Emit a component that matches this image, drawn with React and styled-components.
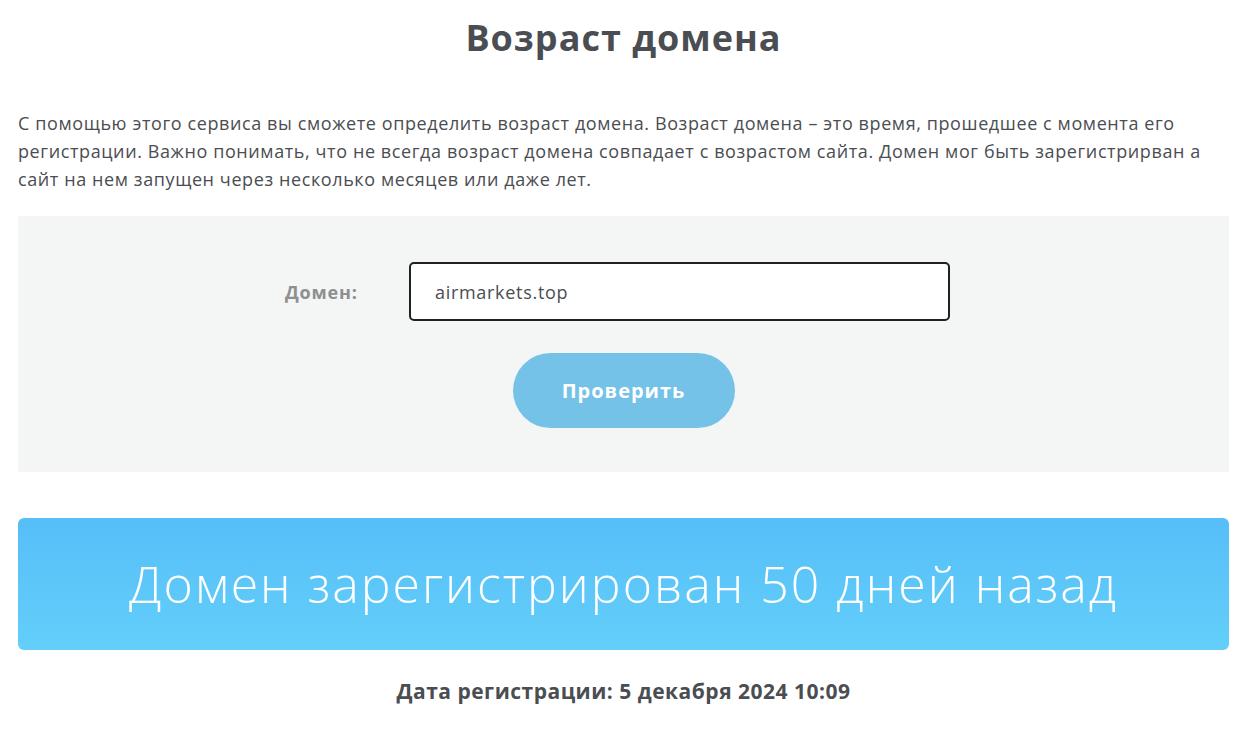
import React from "react";
import styled, { createGlobalStyle } from "styled-components";

const GlobalStyle = createGlobalStyle`
  html, body {
    margin: 0;
    padding: 0;
    background: #ffffff;
  }
  body {
    font-family: "Open Sans", "DejaVu Sans", sans-serif;
    color: #4a4d52;
  }
`;

const Page = styled.div`
  padding: 0 17px 0 18px;
  display: flex;
  flex-direction: column;
`;

const Title = styled.h1`
  margin: 14px 0 0;
  text-align: center;
  font-size: 36px;
  font-weight: 700;
  letter-spacing: 1px;
  line-height: 48px;
  color: #4a4d52;
`;

const Intro = styled.p`
  margin: 47px 0 0;
  font-size: 18px;
  letter-spacing: 0.6px;
  line-height: 28px;
  color: #4a4d52;
`;

const FormPanel = styled.div`
  margin-top: 23px;
  height: 256px;
  box-sizing: border-box;
  background: #f4f5f5;
  display: flex;
  flex-direction: column;
  align-items: center;
  padding-top: 46px;
  gap: 32px;
`;

const FieldRow = styled.div`
  display: flex;
  align-items: center;
  margin-left: -12px;
`;

const Label = styled.label`
  width: 124px;
  font-size: 18px;
  font-weight: 700;
  letter-spacing: 0.8px;
  color: #8d8f91;
`;

const Input = styled.input`
  width: 541px;
  height: 59px;
  box-sizing: border-box;
  border: 2px solid #1f2124;
  border-radius: 5px;
  padding: 0 0 0 24px;
  font-family: "Open Sans", sans-serif;
  font-size: 18px;
  letter-spacing: 0.7px;
  color: #4a4d52;
  background: #ffffff;
  outline: none;
`;

const CheckButton = styled.button`
  width: 222px;
  height: 75px;
  border: none;
  border-radius: 38px;
  background: #74c2e8;
  color: #ffffff;
  font-family: "Open Sans", sans-serif;
  font-size: 20px;
  font-weight: 700;
  letter-spacing: 1px;
  cursor: pointer;
`;

const ResultBanner = styled.div`
  margin-top: 46px;
  height: 132px;
  border-radius: 6px;
  background: linear-gradient(180deg, #56bef8 0%, #63cffa 100%);
  display: flex;
  align-items: center;
  justify-content: center;
  color: #ffffff;
  font-size: 50px;
  font-weight: 300;
  letter-spacing: 2px;
`;

const RegDate = styled.div`
  margin-top: 27px;
  text-align: center;
  font-size: 21px;
  font-weight: 700;
  letter-spacing: 0.5px;
  color: #4a4d52;
`;

export default function App() {
  return (
    <>
      <GlobalStyle />
      <Page>
        <Title>Возраст домена</Title>
        <Intro>
          С помощью этого сервиса вы сможете определить возраст домена. Возраст
          домена – это время, прошедшее с момента его регистрации. Важно
          понимать, что не всегда возраст домена совпадает с возрастом сайта.
          Домен мог быть зарегистрирван а сайт на нем запущен через несколько
          месяцев или даже лет.
        </Intro>
        <FormPanel>
          <FieldRow>
            <Label htmlFor="domain">Домен:</Label>
            <Input id="domain" defaultValue="airmarkets.top" />
          </FieldRow>
          <CheckButton>Проверить</CheckButton>
        </FormPanel>
        <ResultBanner>Домен зарегистрирован 50 дней назад</ResultBanner>
        <RegDate>Дата регистрации: 5 декабря 2024 10:09</RegDate>
      </Page>
    </>
  );
}
